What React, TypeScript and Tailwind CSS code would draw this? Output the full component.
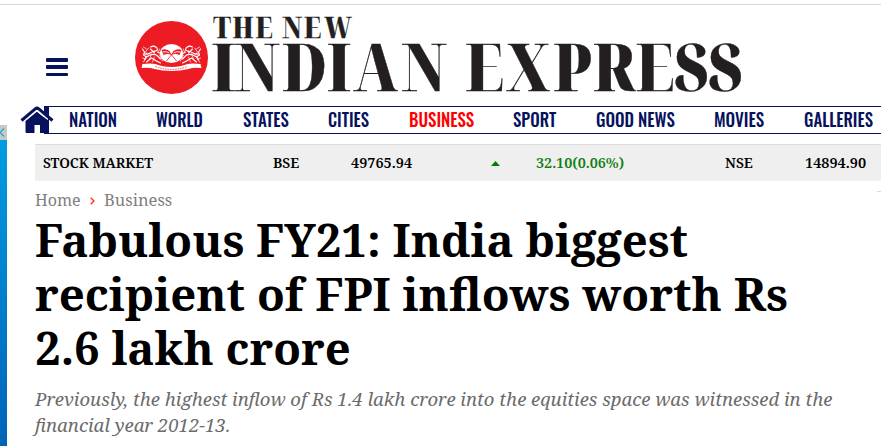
import { useLayoutEffect, useRef, useState, type ReactNode } from "react";

/* Sets one line of text to a given measure by condensing or widening it. */
function Fit({ width, className = "", children }: { width: number; className?: string; children: ReactNode }) {
  const ref = useRef<HTMLSpanElement>(null);
  const [scale, setScale] = useState(1);
  useLayoutEffect(() => {
    if (ref.current) setScale(width / ref.current.offsetWidth);
  }, [width]);
  return (
    <span className={`block shrink-0 whitespace-nowrap ${className}`} style={{ width }}>
      <span ref={ref} className="inline-block origin-left" style={{ transform: `scaleX(${scale})` }}>
        {children}
      </span>
    </span>
  );
}

const NAV = [
  { label: "NATION", width: 48 },
  { label: "WORLD", width: 47 },
  { label: "STATES", width: 46 },
  { label: "CITIES", width: 41 },
  { label: "BUSINESS", width: 65, active: true },
  { label: "SPORT", width: 43 },
  { label: "GOOD NEWS", width: 79 },
  { label: "MOVIES", width: 50 },
  { label: "GALLERIES", width: 69 },
];

function Lion() {
  return (
    <g fill="none" stroke="#fff" strokeLinecap="round" strokeLinejoin="round">
      <path strokeWidth="1.1" d="M-29 -8l2 3-1 3 3 2M-21 -10c4-2 7 0 7 3l-4 2M-21 -8l4 4M-14 -5l4 2M-27 3c2-4 7-7 12-5l4 4M-25 5l5-4 5 3 4 2M-27 -3c4 1 6-2 10-3" />
      <path strokeWidth="0.7" d="M-28 -10l3 2M-23 -9l-3 4 2 3M-25 -1l-3 6M-17 0l-2 5M-12 -2l3 6M-12 -8l-1 3M-20 -3l-2 5M-29 1l3 1M-18 -11l3 2" />
    </g>
  );
}

function Logo() {
  return (
    <svg width="616" height="90" viewBox="130 10 616 90" className="block overflow-visible" fontFamily="'Noto Serif Display', 'Playfair Display', 'Liberation Serif', serif" fontWeight="900">
      <circle cx="171.5" cy="57.5" r="36.5" fill="#ed1c24" />
      <g transform="translate(171.5 57)">
        <Lion />
        <g transform="scale(-1 1)">
          <Lion />
        </g>
        <ellipse cx="0" cy="-3.5" rx="11.5" ry="9.5" fill="#fff" />
        <path d="M-10-7q4-2 8 1l2 4q-4-2-8 0zM10-7q-4-2-8 1l-2 4q4-2 8 0z" fill="#ed1c24" />
        <path d="M-9-5q4-1 7 1M9-5q-4-1-7 1" stroke="#fff" strokeWidth="0.9" fill="none" />
        <path d="M-5 4L3-6M5 4L-3-6" stroke="#ed1c24" strokeWidth="0.8" />
        <path d="M-29 7q8-1 13 0q7 3 16 3t16-3q5-1 13 0l1 4q-8-1-13 1q-8 2-17 2t-17-2q-5-2-13-1z" fill="#fff" />
        <path d="M-16 9.500q8 3 16 3t16-3" stroke="#ed1c24" strokeWidth="0.8" strokeDasharray="1.5 1" fill="none" />
      </g>
      <g fill="#231f20" stroke="#231f20" strokeWidth="0.4" textAnchor="middle" transform="scale(0.88 1)">
        <text y="38.5" fontSize="28.5" x={[222, 243, 264].map((x) => x / 0.88)}>THE</text>
        <text y="38.5" fontSize="28.5" x={[292, 312.5, 338].map((x) => x / 0.88)}>NEW</text>
        <text y="91" fontSize="64.5" x={[223.5, 257, 304.5, 339, 375.5, 424].map((x) => x / 0.88)}>INDIAN</text>
        <text y="91" fontSize="64.5" x={[484.5, 528, 572, 614.5, 655, 691.5, 725.5].map((x) => x / 0.88)}>EXPRESS</text>
      </g>
    </svg>
  );
}

export default function App() {
  return (
    <div className="relative h-[446px] w-[881px] overflow-hidden bg-white font-['Noto_Serif','Droid_Serif','DejaVu_Serif_Condensed','DejaVu_Serif',serif] text-black">
      <header className="mt-1 flex h-[102px] border-t border-[#d6d6dc]">
        <button aria-label="Menu" className="mt-[53px] ml-[46px] flex h-[18px] w-[22px] flex-col justify-between">
          <span className="h-[3.5px] w-full rounded-[1px] bg-[#06125e]" />
          <span className="h-[3.5px] w-full rounded-[1px] bg-[#06125e]" />
          <span className="h-[3.5px] w-full rounded-[1px] bg-[#06125e]" />
        </button>
        <div className="mt-[5px] ml-[62px]">
          <Logo />
        </div>
      </header>

      <nav className="flex h-7 pl-5">
        <svg width="34" height="28" viewBox="20 106 34 28" className="relative z-10 shrink-0">
          <path d="M44 106h5v28h-5z" fill="#06125e" />
          <path d="M25.500 121L37 111.500L48.500 121V132q0 1-1 1H40V125H34.500V133H26.500q-1 0-1-1z" fill="#06125e" />
          <path d="M22 120.500L37 108.500L49 118" fill="none" stroke="#fff" strokeWidth="4.800" />
          <path d="M44 106h5v10l-5-4z" fill="#06125e" />
          <path d="M21.500 120.500L35.500 108.700Q37 107.600 38.500 108.700L52.500 120.500" fill="none" stroke="#06125e" strokeWidth="3" />
        </svg>
        <ul className="-ml-[5px] flex flex-1 items-start gap-[39.500px] border-y border-[#06125e] pl-[19.500px] font-[Oswald,Roboto] text-[18px] leading-[24px] font-medium text-[#06125e]">
          {NAV.map((item) => (
            <li key={item.label} className={item.active ? "text-[#ff0000]" : ""}>
              <Fit width={item.width}>{item.label}</Fit>
            </li>
          ))}
        </ul>
      </nav>

      <div className="flex">
        <aside className="-mt-[9px] flex h-[321px] w-[7px] shrink-0 flex-col">
          <div className="h-[15px] bg-[#c8c8c8]">
            <svg width="7" height="15" viewBox="0 0 7 15">
              <path d="M4 3.500L0 7.500L4 11.500" fill="none" stroke="#12aecb" strokeWidth="1.200" />
            </svg>
          </div>
          <div className="flex-1 bg-linear-to-b from-[#009ce2] to-[#0063b8]" />
        </aside>

        <main className="ml-7 w-[846px]">
          <section className="mt-2.5 flex h-[37px] items-center border-t border-[#dcdcdc] bg-[#efefef] pl-2 text-[14px] leading-5 font-semibold">
            <Fit width={110}>STOCK MARKET</Fit>
            <Fit width={26} className="ml-[120px]">BSE</Fit>
            <Fit width={61} className="ml-[52px]">49765.94</Fit>
            <svg width="9" height="5" viewBox="0 0 9 5" className="ml-[79px]">
              <path d="M0 5L4.500 0L9 5z" fill="#008000" />
            </svg>
            <Fit width={88} className="ml-9 text-[#108010]">32.10(0.06%)</Fit>
            <Fit width={28} className="ml-[101px]">NSE</Fit>
            <Fit width={61} className="ml-[52px]">14894.90</Fit>
          </section>

          <div className="flex h-8 items-start justify-between pt-[9px]">
            <div className="flex items-center text-[16px] leading-5 text-[#808080]">
              <Fit width={46}>Home</Fit>
              <svg width="5" height="8" viewBox="0 0 5 8" className="mt-0.5 ml-[9px]">
                <path d="M0.700 0.700L4 4L0.700 7.300" fill="none" stroke="#ff2a1a" strokeWidth="1.300" />
              </svg>
              <Fit width={68} className="ml-[9px]">Business</Fit>
            </div>
            <span className="mt-px h-px w-1 bg-[#dddddd]" />
          </div>

          <h1 className="-ml-[0.5px] text-[45px] leading-[54px] font-bold">
            <Fit width={652.5}>Fabulous FY21: India biggest</Fit>
            <Fit width={752.5}>recipient of FPI inflows worth Rs</Fit>
            <Fit width={315.5}>2.6 lakh crore</Fit>
          </h1>

          <p className="mt-[11px] -ml-[0.5px] text-[18px] leading-[26px] text-[#6b6b6b] italic">
            <Fit width={797.5}>Previously, the highest inflow of Rs 1.4 lakh crore into the equities space was witnessed in the</Fit>
            <Fit width={195.5}>financial year 2012-13.</Fit>
          </p>
        </main>
      </div>
    </div>
  );
}
